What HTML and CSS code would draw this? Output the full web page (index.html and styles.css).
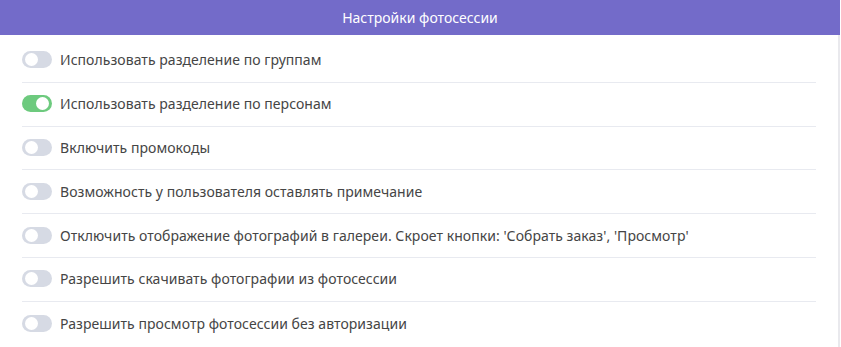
FILE: index.html
```html
<!DOCTYPE html>
<html lang="ru">
<head>
<meta charset="utf-8">
<link rel="stylesheet" href="styles.css">
</head>
<body>
<div class="card">
  <div class="card-header">Настройки фотосессии</div>
  <div class="card-body">
    <div class="row"><span class="toggle"></span><span class="label">Использовать разделение по группам</span></div>
    <div class="row"><span class="toggle on"></span><span class="label">Использовать разделение по персонам</span></div>
    <div class="row"><span class="toggle"></span><span class="label">Включить промокоды</span></div>
    <div class="row"><span class="toggle"></span><span class="label">Возможность у пользователя оставлять примечание</span></div>
    <div class="row"><span class="toggle"></span><span class="label">Отключить отображение фотографий в галереи. Скроет кнопки: 'Собрать заказ', 'Просмотр'</span></div>
    <div class="row"><span class="toggle"></span><span class="label">Разрешить скачивать фотографии из фотосессии</span></div>
    <div class="row last"><span class="toggle"></span><span class="label">Разрешить просмотр фотосессии без авторизации</span></div>
  </div>
</div>
</body>
</html>
```
FILE: styles.css
```css
* { box-sizing: border-box; }
html, body { margin: 0; padding: 0; background: #fff; }
body { font-family: "Noto Sans", "Open Sans", sans-serif; color: #454545; }
.card {
  width: 841px;
  height: 347px;
  overflow: hidden;
}
.card-header {
  width: 840px;
  height: 35px;
  background: #736bc9;
  color: #fff;
  font-size: 14px;
  display: flex;
  align-items: center;
  justify-content: center;
  padding-bottom: 1px;
}
.card-body {
  width: 840px;
  border-right: 2px solid #e9e9ed;
  padding: 4px 22px 0 22px;
  height: 312px;
}
.row {
  height: 43.8px;
  display: flex;
  align-items: center;
  border-bottom: 1px solid #e8eaf0;
  padding-bottom: 1px;
}
.row.last { border-bottom: none; }
.toggle {
  position: relative;
  width: 30px;
  height: 17px;
  border-radius: 9px;
  background: #d6dae4;
  flex: none;
  margin-right: 8px;
}
.toggle::after {
  content: "";
  position: absolute;
  left: 3px;
  top: 2px;
  width: 13px;
  height: 13px;
  border-radius: 50%;
  background: #fff;
}
.toggle.on { background: #6dca7e; }
.toggle.on::after { left: 14px; }
.label {
  font-size: 14px;
  letter-spacing: 0.05px;
}
```
